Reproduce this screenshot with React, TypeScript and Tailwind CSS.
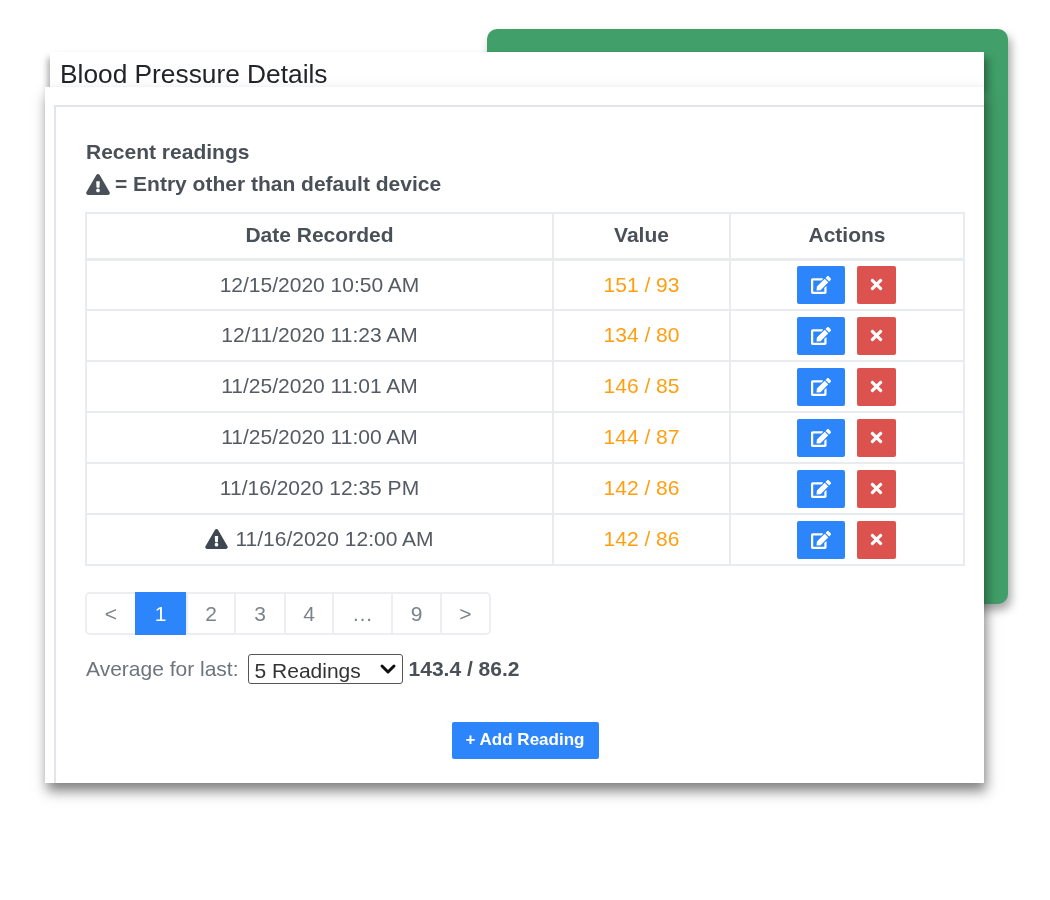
import { ChevronDown } from "lucide-react"
import { FaEdit, FaExclamationTriangle, FaTimes } from "react-icons/fa"

const readings = [
  { date: "12/15/2020 10:50 AM", value: "151 / 93" },
  { date: "12/11/2020 11:23 AM", value: "134 / 80" },
  { date: "11/25/2020 11:01 AM", value: "146 / 85" },
  { date: "11/25/2020 11:00 AM", value: "144 / 87" },
  { date: "11/16/2020 12:35 PM", value: "142 / 86" },
  { date: "11/16/2020 12:00 AM", value: "142 / 86", flagged: true },
]

const pages = [
  { label: "<", w: "w-[48px]" },
  { label: "1", w: "w-[51px]", active: true },
  { label: "2", w: "w-[48px]" },
  { label: "3", w: "w-[50px]" },
  { label: "4", w: "w-[48px]" },
  { label: "…", w: "w-[59px]" },
  { label: "9", w: "w-[49px]" },
  { label: ">", w: "w-[49px]" },
]

export default function App() {
  return (
    <div className="relative h-[900px] w-[1050px] overflow-hidden bg-white pt-[52px] font-['Liberation_Sans',Arial,sans-serif] text-[#495057] blur-[0.5px]">
      {/* Green panel behind the card */}
      <div className="absolute left-[487px] top-[29px] h-[575px] w-[521px] rounded-[10px] bg-[#419f69] shadow-[3px_6px_10px_rgba(0,0,0,0.35)]" />

      <div className="relative ml-[50px] h-[35px] w-[934px] bg-white pl-[10px] text-[26.3px] leading-[45px] text-[#212529] shadow-[4px_6px_8px_rgba(0,0,0,0.35),-3px_6px_6px_rgba(0,0,0,0.25)]">
        Blood Pressure Details
      </div>

      <div className="relative ml-[45px] h-[696px] w-[939px] bg-white pl-[9px] pt-[18px] shadow-[2px_8px_12px_rgba(0,0,0,0.5)]">
        <div className="h-full border-l-2 border-t-2 border-[#e2e6ea] pl-[29px] pt-[33px]">
          <div className="pl-[1px] text-[21px] font-bold leading-[24px]">
            <p>Recent readings</p>
            <p className="mt-[8px] flex items-center gap-[5px]">
              <FaExclamationTriangle className="h-[21px] w-[24px]" />= Entry other than default device
            </p>
          </div>

          <table className="mt-[16px] w-[878px] table-fixed border-collapse text-[21px]">
            <colgroup>
              <col className="w-[467px]" />
              <col className="w-[177px]" />
              <col className="w-[234px]" />
            </colgroup>
            <thead>
              <tr className="h-[46px] font-bold">
                <th className="border-2 border-b-[3px] border-[#e9ecef] pb-[2px]">Date Recorded</th>
                <th className="border-2 border-b-[3px] border-[#e9ecef] pb-[2px]">Value</th>
                <th className="border-2 border-b-[3px] border-[#e9ecef] pb-[2px]">Actions</th>
              </tr>
            </thead>
            <tbody>
              {readings.map((r, i) => (
                <tr key={i} className="h-[51px]">
                  <td className="border-2 border-[#e9ecef] pb-[1px] text-center text-[#545b62]">
                    {r.flagged && <FaExclamationTriangle className="mr-[7px] inline h-[20px] w-[23px] align-[-3px] text-[#3f4750]" />}
                    {r.date}
                  </td>
                  <td className="border-2 border-[#e9ecef] pb-[1px] text-center text-[#ff9f10]">{r.value}</td>
                  <td className="border-2 border-[#e9ecef]">
                    <div className="flex justify-center gap-[12px] pr-[2px]">
                      <button className="flex h-[38px] w-[48px] items-center justify-center rounded-[2px] bg-[#2d85fb] text-white">
                        <FaEdit className="h-[18px] w-[20px]" />
                      </button>
                      <button className="flex h-[38px] w-[39px] items-center justify-center rounded-[2px] bg-[#dc524e] text-white">
                        <FaTimes className="h-[17px] w-[15px]" />
                      </button>
                    </div>
                  </td>
                </tr>
              ))}
            </tbody>
          </table>

          <div className="mt-[26px] flex h-[43px] w-[406px] rounded-[5px] border-2 border-[#eceef1] text-[21px] text-[#7b838a]">
            {pages.map((p) => (
              <div
                key={p.label}
                className={
                  p.active
                    ? `-my-[2px] flex ${p.w} items-center justify-center bg-[#2d85fb] text-white`
                    : `flex ${p.w} items-center justify-center border-l-2 border-[#eceef1] first:border-l-0`
                }
              >
                {p.label}
              </div>
            ))}
          </div>

          <div className="mt-[19px] flex h-[30px] items-center pl-[1px] text-[21px]">
            <span className="text-[#6c757d]">Average for last:</span>
            <div className="relative ml-[9px]">
              <select className="block h-[30px] w-[155px] appearance-none rounded-[3px] border border-[#555] bg-white pl-[6px] text-[21px] text-[#333]">
                <option>5 Readings</option>
              </select>
              <ChevronDown className="pointer-events-none absolute right-[3px] top-[3px] h-[24px] w-[24px] text-[#111]" strokeWidth={3} />
            </div>
            <span className="ml-[6px] font-bold">143.4 / 86.2</span>
          </div>

          <div className="mt-[38px] flex w-[880px] justify-center">
            <button className="h-[37px] w-[147px] rounded-[2px] bg-[#2d85fb] pb-[2px] text-[17px] font-bold text-white">
              + Add Reading
            </button>
          </div>
        </div>
      </div>
    </div>
  )
}
